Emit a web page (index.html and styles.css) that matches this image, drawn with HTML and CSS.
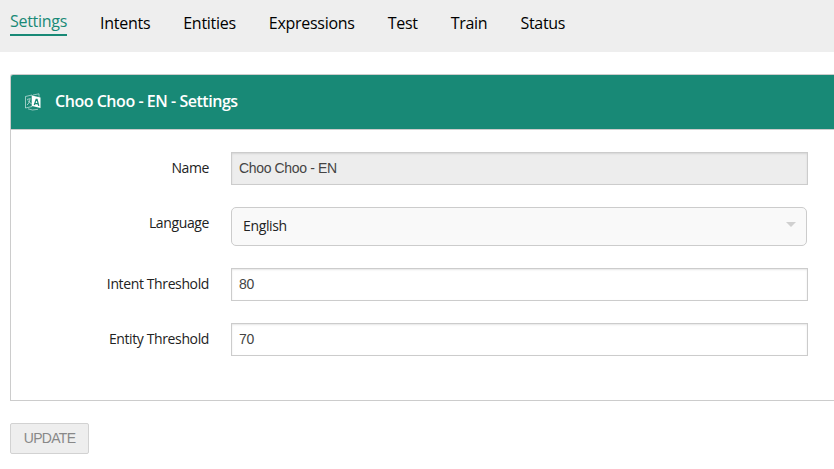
FILE: index.html
```html
<!DOCTYPE html>
<html lang="en">
<head>
<meta charset="utf-8">
<title>Choo Choo - EN - Settings</title>
<link rel="stylesheet" href="styles.css">
</head>
<body>
<nav class="nav">
  <a class="nav-item active">Settings</a>
  <a class="nav-item">Intents</a>
  <a class="nav-item">Entities</a>
  <a class="nav-item">Expressions</a>
  <a class="nav-item">Test</a>
  <a class="nav-item">Train</a>
  <a class="nav-item">Status</a>
</nav>
<main class="content">
  <section class="panel">
    <header class="panel-header">
      <svg class="panel-icon" width="18" height="18" viewBox="0 0 18 18">
        <path d="M1.500 3.500 8 2v11.500L1.500 15z" fill="none" stroke="#fff" stroke-width=".8" opacity=".7"/>
        <path d="M3 6.500 6.500 5.500M6 6C5.500 9 4.500 11 3 12M4 7.500C5 9 6 10 7.500 10.500" fill="none" stroke="#fff" stroke-width=".8" opacity=".75"/>
        <path d="M8 2.500 16.500 4.500v10.500L8 13z" fill="#fff"/>
        <path d="M10.300 12 12.200 6.300h.8l1.800 6.500M11 10.300l3.200.5" fill="none" stroke="#188976" stroke-width="1.300"/>
        <path d="M9 2 15 .800v3M4 15.800Q8 18 14 16.300" fill="none" stroke="#fff" stroke-width=".8" opacity=".65"/>
      </svg>
      <h1 class="panel-title">Choo Choo - EN - Settings</h1>
    </header>
    <form class="form">
      <div class="row">
        <label class="label" for="name">Name</label>
        <input class="input" id="name" value="Choo Choo - EN" disabled>
      </div>
      <div class="row">
        <label class="label">Language</label>
        <div class="select"><span class="select-value">English</span><span class="arrow"></span></div>
      </div>
      <div class="row">
        <label class="label" for="intent">Intent Threshold</label>
        <input class="input" id="intent" value="80">
      </div>
      <div class="row">
        <label class="label" for="entity">Entity Threshold</label>
        <input class="input" id="entity" value="70">
      </div>
    </form>
  </section>
  <button class="update">UPDATE</button>
</main>
</body>
</html>
```
FILE: styles.css
```css
* { box-sizing: border-box; }
body {
  margin: 0;
  background: #fff;
  color: #222;
  font-family: "Open Sans", sans-serif;
  overflow: hidden;
}
.nav {
  display: flex;
  align-items: flex-start;
  gap: 33px;
  height: 52px;
  padding: 13px 10px 0;
  background: #eee;
}
.nav-item {
  color: #000;
  font-size: 16px;
  letter-spacing: -.28px;
  line-height: 21px;
}
.nav-item.active {
  margin-top: -2px;
  padding-bottom: 2px;
  border-bottom: 2px solid #188976;
  color: #188976;
}
.content { padding: 22px 0 0 10px; }
.panel {
  height: 327px;
  border: 1px solid #ccc;
  border-right: 0;
  border-radius: 3px 0 0 0;
}
.panel-header {
  display: flex;
  align-items: center;
  gap: 13px;
  height: 55px;
  padding-left: 13px;
  border-bottom: 1px solid #ccc;
  border-radius: 2px 0 0 0;
  background: #188976;
}
.panel-title {
  margin: 0 0 2px;
  color: #fff;
  font-size: 16px;
  font-weight: 600;
  letter-spacing: -.46px;
  line-height: 20px;
}
.form {
  display: grid;
  gap: 22px;
  padding-top: 22px;
}
.row {
  display: grid;
  grid-template-columns: 198px 577px;
  column-gap: 22px;
  align-items: start;
}
.label {
  font-size: 14px;
  letter-spacing: -.38px;
  line-height: 31px;
  text-align: right;
}
.input {
  height: 33px;
  padding: 0 7px 1px;
  border: 1px solid #ccc;
  border-radius: 0;
  outline: 0;
  background: #fff;
  box-shadow: inset 0 1px 2px rgba(0, 0, 0, .1);
  color: #444;
  font: 14px "Liberation Sans", sans-serif;
  letter-spacing: -.35px;
}
.input:disabled { background: #ededed; }
.select {
  display: flex;
  align-items: center;
  justify-content: space-between;
  width: 576px;
  height: 39px;
  padding: 0 10px 0 11px;
  border: 1px solid #ccc;
  border-radius: 5px;
  background: #f9f9f9;
  font-size: 14px;
  letter-spacing: -.35px;
}
.select-value { margin-bottom: 2px; }
.arrow {
  margin-bottom: 4px;
  border: 5.5px solid transparent;
  border-top-color: #d0d0d0;
  border-bottom: 0;
}
.update {
  display: block;
  width: 79px;
  height: 31px;
  margin-top: 22px;
  padding: 0 0 2px;
  border: 1px solid #d2d2d2;
  border-radius: 2px;
  background: #eee;
  color: #888;
  font: 14px "Liberation Sans", sans-serif;
  letter-spacing: -.7px;
}
```
